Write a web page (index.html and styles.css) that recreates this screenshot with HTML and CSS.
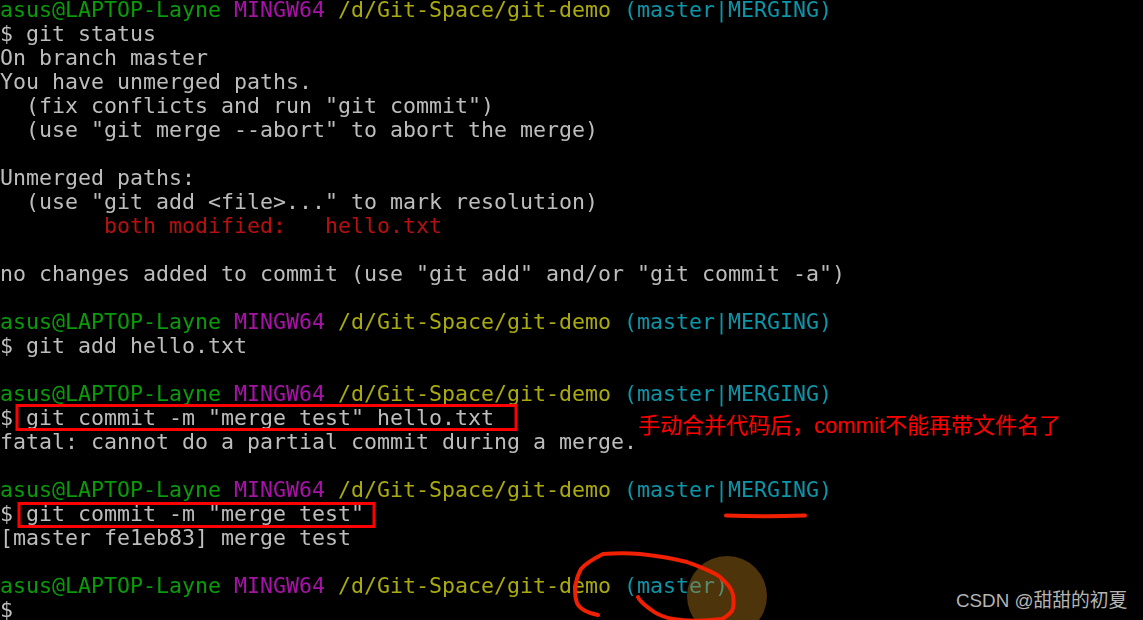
FILE: index.html
```html
<!DOCTYPE html>
<html lang="en">
<head>
<meta charset="utf-8">
<title>git merge</title>
<link rel="stylesheet" href="styles.css">
</head>
<body>
<main class="shot">
<pre class="term"><span class="g">asus@LAPTOP-Layne</span> <span class="m">MINGW64</span> <span class="y">/d/Git-Space/git-demo</span> <span class="c">(master|MERGING)</span>
$ git status
On branch master
You have unmerged paths.
  (fix conflicts and run "git commit")
  (use "git merge --abort" to abort the merge)

Unmerged paths:
  (use "git add &lt;file&gt;..." to mark resolution)
        <span class="r">both modified:   hello.txt</span>

no changes added to commit (use "git add" and/or "git commit -a")

<span class="g">asus@LAPTOP-Layne</span> <span class="m">MINGW64</span> <span class="y">/d/Git-Space/git-demo</span> <span class="c">(master|MERGING)</span>
$ git add hello.txt

<span class="g">asus@LAPTOP-Layne</span> <span class="m">MINGW64</span> <span class="y">/d/Git-Space/git-demo</span> <span class="c">(master|MERGING)</span>
$ git commit -m "merge test" hello.txt
fatal: cannot do a partial commit during a merge.

<span class="g">asus@LAPTOP-Layne</span> <span class="m">MINGW64</span> <span class="y">/d/Git-Space/git-demo</span> <span class="c">(master|MERGING)</span>
$ git commit -m "merge test"
[master fe1eb83] merge test

<span class="g">asus@LAPTOP-Layne</span> <span class="m">MINGW64</span> <span class="y">/d/Git-Space/git-demo</span> <span class="c">(master)</span>
$</pre>
<svg class="ink" width="1143" height="620" viewBox="0 0 1143 620" aria-hidden="true">
  <ellipse class="cursor" cx="727" cy="596" rx="40" ry="40"/>
  <rect class="box" x="17" y="405.5" width="499" height="24"/>
  <rect class="box" x="19" y="503.5" width="355" height="23"/>
  <path class="under" d="M726 515.5 Q765 517 805 515.5"/>
  <path class="circle" d="M598 615 C588 613 580 610 577 603 C574 595 574 582 581 569 C586 563 595 558 603 554 C615 553 630 553 640 554 C660 556 675 559 687 562 C700 567 712 571 720 577 C727 583 732 589 733 595 C734 602 734 607 732 611 C729 615 726 617 722 619 C705 621 685 621 673 619 C662 617 655 613 650 609 C645 605 640 602 638 597"/>
</svg>
<p class="note">手动合并代码后，commit不能再带文件名了</p>
<p class="mark">CSDN @甜甜的初夏</p>
</main>
</body>
</html>
```
FILE: styles.css
```css
html, body {
  margin: 0;
  background: #000;
}
.shot {
  position: relative;
  width: 1143px;
  height: 620px;
  overflow: hidden;
  background: #000;
}
.term {
  margin: -2px 0 0 0;
  font-family: "DejaVu Sans Mono", monospace;
  font-size: 21.6px;
  line-height: 24px;
  color: #bdbdbd;
  filter: blur(0.7px);
}
.g { color: #0a9a0a; }
.m { color: #a912a9; }
.y { color: #aaaa10; }
.c { color: #0f95a8; }
.r { color: #b81010; }
.ink {
  position: absolute;
  left: 0;
  top: 0;
}
.cursor { fill: #b97d1a; fill-opacity: .42; }
.box { fill: none; stroke: #f00; stroke-width: 3; }
.under { fill: none; stroke: #f02000; stroke-width: 4; stroke-linecap: round; }
.circle { fill: none; stroke: #f02000; stroke-width: 4; stroke-linecap: round; stroke-linejoin: round; }
.note {
  position: absolute;
  left: 638px;
  top: 411px;
  margin: 0;
  font-family: "Liberation Sans", "Noto Sans CJK SC", sans-serif;
  font-size: 22px;
  line-height: 30px;
  color: #f00;
  white-space: nowrap;
}
.mark {
  position: absolute;
  left: 956px;
  top: 589px;
  margin: 0;
  font-family: "Liberation Sans", "Noto Sans CJK SC", sans-serif;
  font-size: 18.8px;
  line-height: 24px;
  color: #b4b4b4;
  white-space: nowrap;
}
```
